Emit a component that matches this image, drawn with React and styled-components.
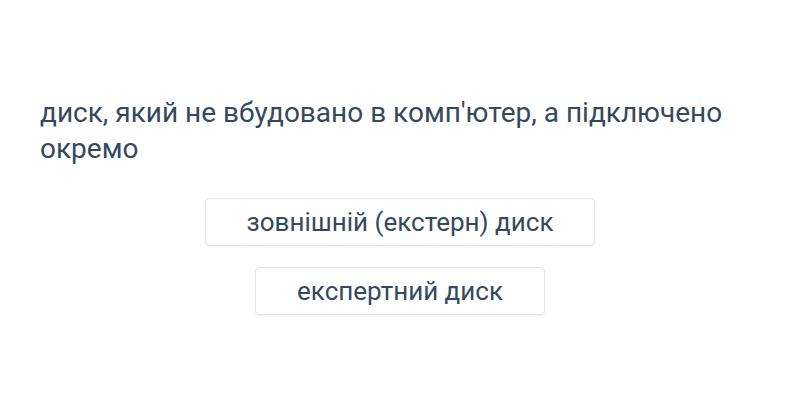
import styled, { createGlobalStyle } from "styled-components";

const GlobalStyle = createGlobalStyle`
  html, body {
    margin: 0;
    padding: 0;
    background: #ffffff;
  }
  body {
    font-family: Roboto, "Noto Sans", sans-serif;
    color: #34495e;
  }
`;

const Page = styled.div`
  width: 800px;
  height: 400px;
  box-sizing: border-box;
  padding: 10px 40px 0;
  display: flex;
  flex-direction: column;
  justify-content: center;
`;

const Question = styled.div`
  font-size: 28px;
  line-height: 36px;
  margin-bottom: 31px;
`;

const Options = styled.div`
  display: flex;
  flex-direction: column;
  align-items: center;
  gap: 21px;
`;

const Option = styled.button`
  font-family: Roboto, "Noto Sans", sans-serif;
  font-size: 26px;
  line-height: 30px;
  color: #34495e;
  background: #ffffff;
  border: 1px solid #e1e4e8;
  border-radius: 5px;
  padding: 8px 41px;
  box-shadow: 0 1px 2px rgba(0, 0, 0, 0.06);
  cursor: pointer;
`;

const answers = ["зовнішній (екстерн) диск", "експертний диск"];

function App() {
  return (
    <>
      <GlobalStyle />
      <Page>
        <Question>диск, який не вбудовано в комп'ютер, а підключено окремо</Question>
        <Options>
          {answers.map((a) => (
            <Option key={a}>{a}</Option>
          ))}
        </Options>
      </Page>
    </>
  );
}

export default App;
